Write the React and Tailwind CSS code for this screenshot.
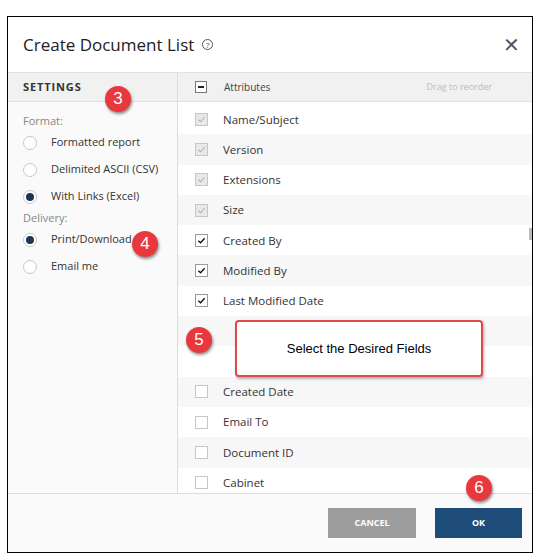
import React from "react";

const F = { fontFamily: '"Open Sans", "Noto Sans", sans-serif' };

function Badge({ n, cls }) {
  return (
    <div className={"absolute w-[26px] h-[26px] rounded-full bg-[#e8383d] text-white flex items-center justify-center text-[17px] shadow-[1px_2px_3px_rgba(0,0,0,0.45)] " + cls} style={{ fontFamily: '"Liberation Sans", sans-serif' }}>{n}</div>
  );
}

function Radio({ on, label }) {
  return (
    <div className="flex items-center h-[27px] pl-[15px]">
      <div className="w-[14px] h-[14px] rounded-full border border-[#c8c8c8] bg-white flex items-center justify-center">
        {on && <div className="w-[8px] h-[8px] rounded-full bg-[#1d3550]" />}
      </div>
      <span className="ml-[14px] text-[11px] text-[#333]">{label}</span>
    </div>
  );
}

function Box({ state }) {
  if (state === "none") return <div className="w-[13px] h-[13px]" />;
  if (state === "dis")
    return (
      <div className="w-[13px] h-[13px] border border-[#c6c6c6] bg-[#e8e8e8] flex items-center justify-center">
        <svg width="9" height="9" viewBox="0 0 10 10"><path d="M1.5 5.2 L4 7.5 L8.5 2.5" stroke="#b0b0b0" strokeWidth="1.2" fill="none" /></svg>
      </div>
    );
  if (state === "on")
    return (
      <div className="w-[13px] h-[13px] border border-[#9a9a9a] bg-white flex items-center justify-center">
        <svg width="9" height="9" viewBox="0 0 10 10"><path d="M1.5 5.2 L4 7.5 L8.5 2.5" stroke="#111" strokeWidth="1.5" fill="none" /></svg>
      </div>
    );
  return <div className="w-[13px] h-[13px] border border-[#c6c6c6] bg-white" />;
}

const rows = [
  ["Name/Subject", "dis"], ["Version", "dis"], ["Extensions", "dis"], ["Size", "dis"],
  ["Created By", "on"], ["Modified By", "on"], ["Last Modified Date", "on"],
  ["", "none"], ["", "none"],
  ["Created Date", "off"], ["Email To", "off"], ["Document ID", "off"], ["Cabinet", "off"],
];

export default function App() {
  return (
    <div className="w-[538px] h-[560px] bg-white relative" style={F}>
      <div className="absolute left-[7px] top-[16px] w-[526px] h-[537px] border border-black flex flex-col overflow-hidden">
        <div className="h-[55px] flex items-center pl-[15px] pr-[12px] shrink-0">
          <span className="text-[17px] text-[#222]">Create Document List</span>
          <span className="ml-[8px] w-[11px] h-[11px] rounded-full border border-[#555] text-[8px] leading-none flex items-center justify-center text-[#555]">?</span>
          <span className="ml-auto text-[20px] text-[#555] leading-none">✕</span>
        </div>
        <div className="flex flex-1 min-h-0 border-t border-[#e2e2e2]">
          <div className="w-[170px] shrink-0 border-r border-[#dcdcdc] bg-[#fafafa]">
            <div className="h-[29px] bg-[#f1f1f1] border-b border-[#e0e0e0] flex items-center pl-[15px] text-[11px] font-bold tracking-[0.08em] text-[#333]">SETTINGS</div>
            <div className="pt-[11px]">
              <div className="text-[11px] text-[#888] pl-[15px] h-[16px] leading-[16px]">Format:</div>
              <Radio label="Formatted report" />
              <Radio label="Delimited ASCII (CSV)" />
              <Radio on label="With Links (Excel)" />
              <div className="text-[11px] text-[#888] pl-[15px] h-[16px] leading-[16px]">Delivery:</div>
              <Radio on label="Print/Download" />
              <Radio label="Email me" />
            </div>
          </div>
          <div className="flex-1 flex flex-col min-w-0 relative">
            <div className="h-[29px] bg-[#f1f1f1] border-b border-[#e0e0e0] flex items-center pl-[17px] pr-[40px] shrink-0">
              <div className="w-[12px] h-[12px] border border-[#777] bg-white flex items-center justify-center"><div className="w-[6px] h-[1.5px] bg-[#222]" /></div>
              <span className="ml-[17px] text-[10px] text-[#444]">Attributes</span>
              <span className="ml-auto text-[9px] text-[#bbb]">Drag to reorder</span>
            </div>
            <div className="flex-1 overflow-hidden pt-[2px]">
              {rows.map(([t, s], i) => (
                <div key={i} className={"h-[30.3px] flex items-center pl-[17px] " + (i % 2 === 1 ? "bg-[#f7f7f7]" : "bg-white")}>
                  <Box state={s} />
                  <span className="ml-[15px] text-[11.5px] text-[#333]">{t}</span>
                </div>
              ))}
            </div>
            <div className="absolute right-0 top-[155px] w-[3px] h-[12px] bg-[#bbb]" />
          </div>
        </div>
        <div className="h-[59px] shrink-0 border-t border-[#ddd] bg-[#fafafa] flex items-center justify-end gap-[19px] pr-[10px]">
          <div className="w-[88px] h-[30px] bg-[#9d9d9d] text-white text-[9px] font-bold flex items-center justify-center">CANCEL</div>
          <div className="w-[87px] h-[30px] bg-[#1f4d7a] text-white text-[9px] font-bold flex items-center justify-center">OK</div>
        </div>
      </div>
      <div className="absolute left-[235px] top-[320px] w-[248px] h-[57px] bg-white border-2 border-[#e0484d] rounded-[4px] shadow-[1px_2px_3px_rgba(0,0,0,0.3)] flex items-center justify-center text-[13px] text-black" style={{ fontFamily: '"Liberation Sans", sans-serif' }}>Select the Desired Fields</div>
      <Badge n="3" cls="left-[105px] top-[86px]" />
      <Badge n="4" cls="left-[132px] top-[231px]" />
      <Badge n="5" cls="left-[186px] top-[327px]" />
      <Badge n="6" cls="left-[466px] top-[475px]" />
    </div>
  );
}
